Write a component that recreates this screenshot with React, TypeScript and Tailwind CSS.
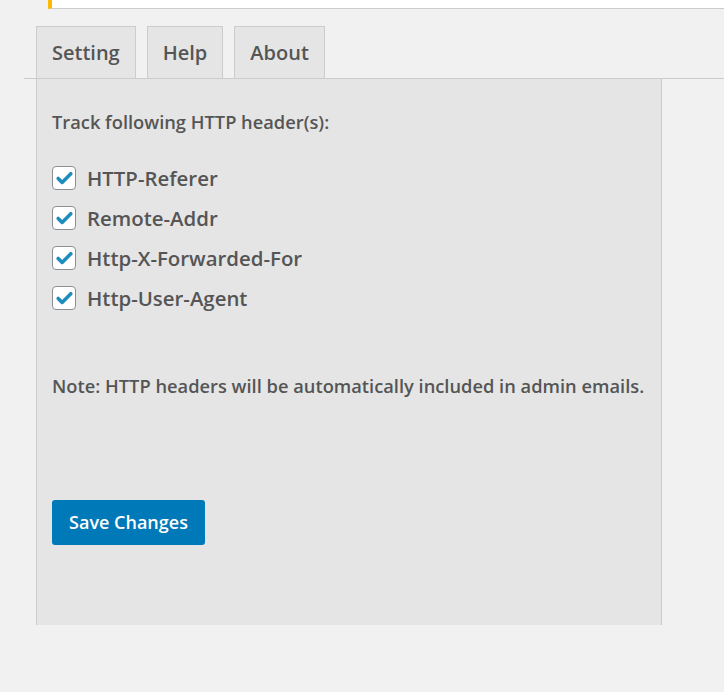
import { Check } from "lucide-react";

const headers = ["HTTP-Referer", "Remote-Addr", "Http-X-Forwarded-For", "Http-User-Agent"];

function Tab({ label }: { label: string }) {
  return (
    <div className="h-[53px] -mb-px flex items-center border border-[#cccccc] bg-[#e5e5e5] px-[15px] text-[20px] font-semibold text-[#555555]">
      {label}
    </div>
  );
}

export default function App() {
  return (
    <div className="min-h-[692px] bg-[#f1f1f1] font-['Open_Sans',sans-serif] text-[#555555]">
      {/* notice strip */}
      <div className="ml-[48px] h-[9px] bg-white border-l-4 border-[#ffb900] border-b border-b-[#cccccc]" />

      {/* tabs */}
      <div className="mt-[17px] ml-[24px] pl-[12px] flex gap-[11px] items-end">
        <Tab label="Setting" />
        <Tab label="Help" />
        <Tab label="About" />
      </div>
      <div className="ml-[24px] h-px bg-[#cccccc]" />

      {/* panel */}
      <div className="ml-[36px] w-[626px] h-[546px] bg-[#e5e5e5] border-x border-[#cccccc] px-[15px] pt-[31px]">
        <p className="text-[18.3px] font-semibold leading-[24px]">Track following HTTP header(s):</p>

        <div className="mt-[32px] flex flex-col gap-[16px]">
          {headers.map((h) => (
            <label key={h} className="flex items-center gap-[11px] h-[24px]">
              <span className="w-[24px] h-[24px] rounded-[4px] border border-[#8c8f94] bg-white flex items-center justify-center">
                <Check className="w-[19px] h-[19px] text-[#1e8cbe]" strokeWidth={4.5} />
              </span>
              <span className="text-[20.4px] font-semibold leading-[24px]">{h}</span>
            </label>
          ))}
        </div>

        <p className="mt-[64px] text-[18.3px] font-semibold leading-[24px]">
          Note: HTTP headers will be automatically included in admin emails.
        </p>

        <button className="mt-[102px] h-[45px] w-[153px] rounded-[3px] bg-[#0079b8] text-white text-[18px] font-semibold">
          Save Changes
        </button>
      </div>
    </div>
  );
}
